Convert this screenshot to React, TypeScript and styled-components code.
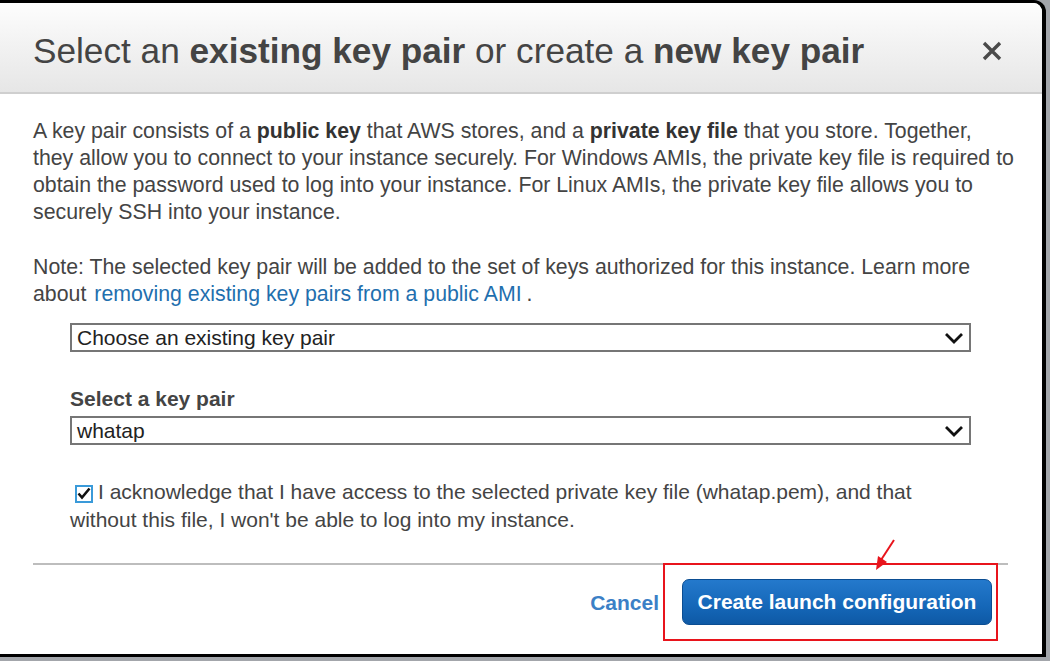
import React from 'react'
import styled, {createGlobalStyle} from 'styled-components'

const GlobalStyle = createGlobalStyle`
  html, body {
    margin: 0;
    padding: 0;
    background: #a3a6ab;
  }
  body {
    width: 1050px;
    height: 661px;
    overflow: hidden;
    font-family: "Liberation Sans", Arial, sans-serif;
  }
`

const Frame = styled.div`
  width: 1042px;
  height: 651px;
  border-top: 3px solid #000;
  border-right: 4px solid #000;
  border-bottom: 3px solid #000;
  border-top-right-radius: 12px;
  background: #fff;
  overflow: hidden;
  display: flex;
  flex-direction: column;
  position: relative;
`

const Header = styled.div`
  height: 83px;
  flex: none;
  display: flex;
  align-items: center;
  justify-content: space-between;
  padding: 6px 38px 0 33px;
  background: linear-gradient(#fdfdfd, #e6e6e6);
  border-bottom: 2px solid #cfcfcf;
`

const Title = styled.h1`
  margin: 0;
  font-size: 35.2px;
  font-weight: normal;
  color: #444;
  white-space: nowrap;
  b {
    font-weight: bold;
  }
`

const Close = styled.div`
  width: 24px;
  height: 24px;
  display: flex;
  align-items: center;
  justify-content: center;
  cursor: pointer;
`

const Body = styled.div`
  padding: 24px 33px 0 33px;
  color: #444;
  font-size: 21.3px;
  line-height: 27px;
  white-space: nowrap;
`

const Para = styled.p`
  margin: 0 0 28px 0;
  b {
    color: #333;
  }
`

const Note = styled.p`
  margin: 0;
`

const Link = styled.a`
  color: #1f6fae;
  text-decoration: none;
  margin: 0 5px 0 8px;
`

const Fields = styled.div`
  padding: 15px 38px 0 37px;
  display: flex;
  flex-direction: column;
  font-size: 21px;
`

const SelectBox = styled.div`
  height: 25px;
  border: 2px solid #767676;
  display: flex;
  align-items: center;
  justify-content: space-between;
  padding: 0 4px 0 5px;
  color: #222;
`

const Label = styled.div`
  margin-top: 35px;
  margin-bottom: 5px;
  line-height: 24px;
  font-weight: bold;
  color: #444;
`

const Ack = styled.label`
  margin-top: 33px;
  display: block;
  line-height: 28px;
  color: #444;
`

const Check = styled.span`
  display: inline-flex;
  align-items: center;
  justify-content: center;
  width: 14px;
  height: 14px;
  border: 2px solid #3a9ad9;
  background: #fff;
  margin: 0 5px 0 5px;
  vertical-align: -1px;
`

const Divider = styled.hr`
  margin: 29px 1px 0 0;
  border: none;
  border-top: 2px solid #bdbdbd;
`

const Footer = styled.div`
  display: flex;
  justify-content: flex-end;
  align-items: center;
  gap: 23px;
  padding: 14px 17px 0 0;
`

const Cancel = styled.a`
  color: #3b80c6;
  font-weight: bold;
  font-size: 21px;
  cursor: pointer;
`

const Primary = styled.button`
  height: 46px;
  width: 310px;
  padding: 0;
  border-radius: 7px;
  border: 1px solid #0b4d92;
  background: linear-gradient(#2479cc, #1567b8 60%, #0e59a5);
  color: #fff;
  font-family: "Liberation Sans", Arial, sans-serif;
  font-weight: bold;
  font-size: 21px;
  cursor: pointer;
`

const Annotation = styled.div`
  position: absolute;
  left: 663px;
  top: 560px;
  width: 331px;
  height: 74px;
  border: 2px solid #e8141c;
  pointer-events: none;
`

const Arrow = styled.svg`
  position: absolute;
  left: 868px;
  top: 532px;
  pointer-events: none;
`

function Chevron() {
  return (
    <svg width="22" height="14" viewBox="0 0 22 14">
      <path d="M3 3 L11 11 L19 3" fill="none" stroke="#111" strokeWidth="2.8"/>
    </svg>
  )
}

export default function App() {
  return (
    <>
      <GlobalStyle/>
      <Frame>
        <Header>
          <Title>Select an <b>existing key pair</b> or create a <b>new key pair</b></Title>
          <Close>
            <svg width="22" height="22" viewBox="0 0 22 22">
              <path d="M3 3 L19 19 M19 3 L3 19" stroke="#4a4a4a" strokeWidth="3.4"/>
            </svg>
          </Close>
        </Header>
        <Body>
          <Para>
            A key pair consists of a <b>public key</b> that AWS stores, and a <b>private key file</b> that you store. Together,<br/>
            they allow you to connect to your instance securely. For Windows AMIs, the private key file is required to<br/>
            obtain the password used to log into your instance. For Linux AMIs, the private key file allows you to<br/>
            securely SSH into your instance.
          </Para>
          <Note>
            Note: The selected key pair will be added to the set of keys authorized for this instance. Learn more<br/>
            about<Link>removing existing key pairs from a public AMI</Link>.
          </Note>
          <Fields>
            <SelectBox>
              <span>Choose an existing key pair</span>
              <Chevron/>
            </SelectBox>
            <Label>Select a key pair</Label>
            <SelectBox>
              <span>whatap</span>
              <Chevron/>
            </SelectBox>
            <Ack>
              <Check>
                <svg width="14" height="13" viewBox="0 0 14 13">
                  <path d="M1.5 6.5 L5 10.5 L12.5 1.5" fill="none" stroke="#111" strokeWidth="2.6"/>
                </svg>
              </Check>
              I acknowledge that I have access to the selected private key file (whatap.pem), and that<br/>
              without this file, I won't be able to log into my instance.
            </Ack>
          </Fields>
          <Divider/>
          <Footer>
            <Cancel>Cancel</Cancel>
            <Primary>Create launch configuration</Primary>
          </Footer>
        </Body>
        <Annotation/>
        <Arrow width="30" height="40" viewBox="0 0 30 40">
          <path d="M26 5 L13 25" stroke="#e8141c" strokeWidth="2"/>
          <path d="M8 35 L10 21 L19 27 Z" fill="#e8141c"/>
        </Arrow>
      </Frame>
    </>
  )
}
